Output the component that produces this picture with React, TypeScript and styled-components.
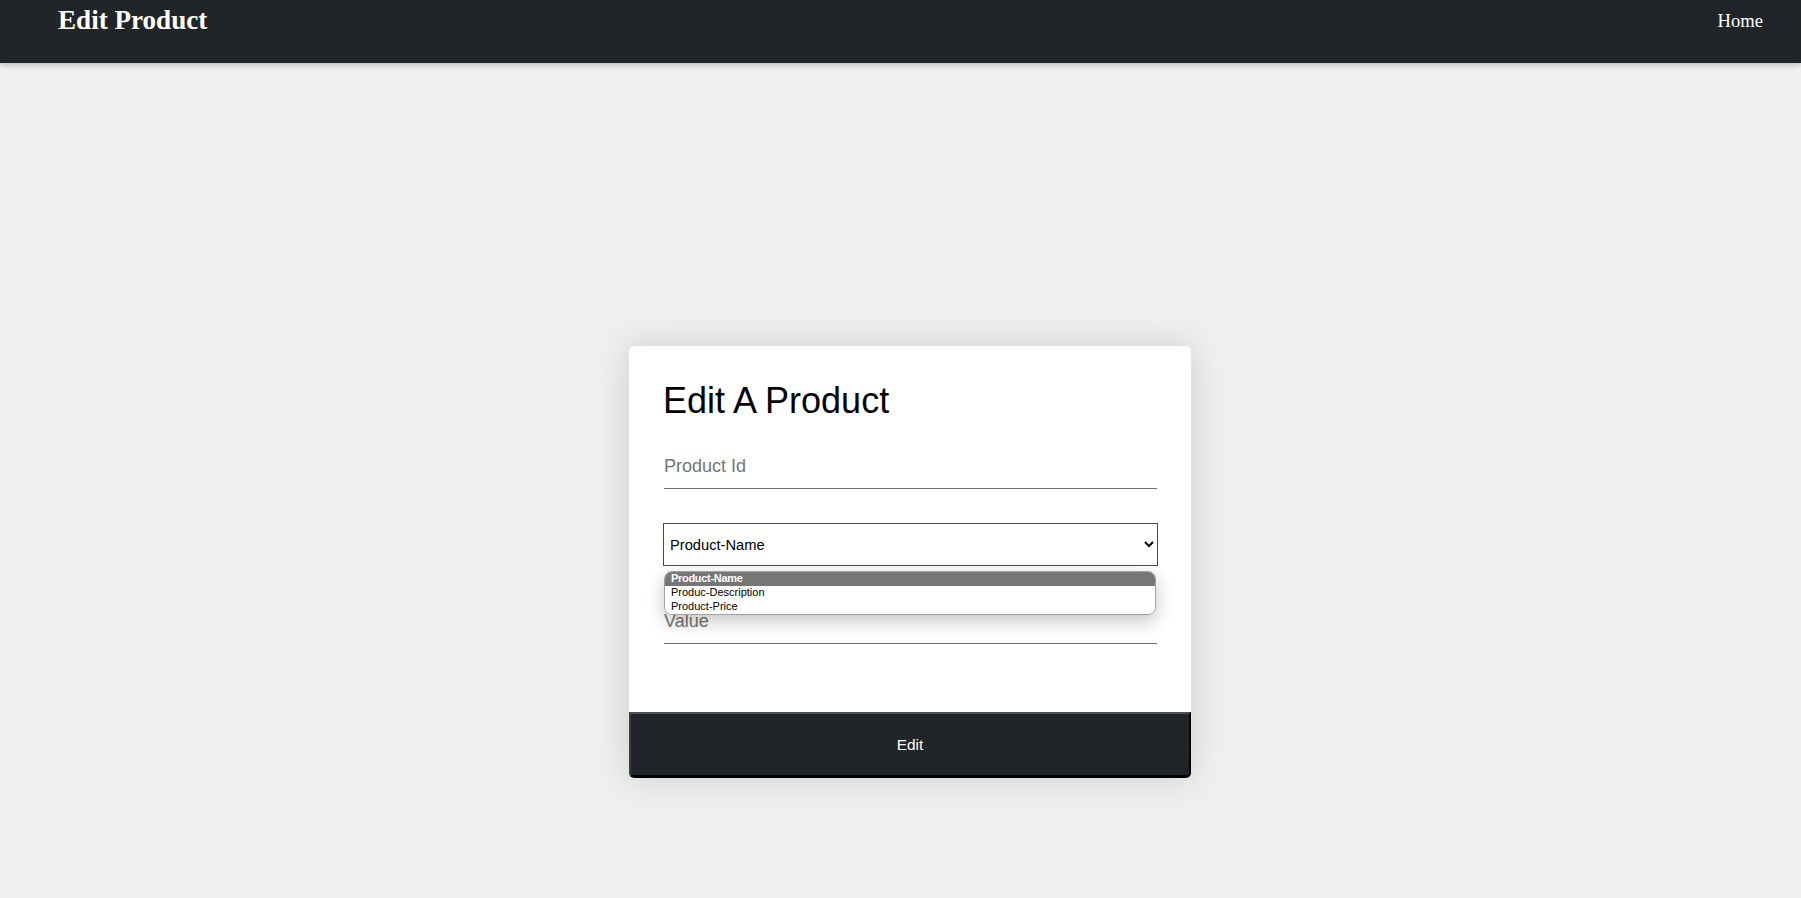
import React from "react";
import styled, { createGlobalStyle } from "styled-components";

const GlobalStyle = createGlobalStyle`
  html, body {
    margin: 0;
    padding: 0;
    background: #efefef;
  }
  body {
    font-family: "Liberation Sans", Arial, sans-serif;
    min-height: 898px;
  }
`;

const Header = styled.header`
  position: relative;
  z-index: 2;
  height: 63px;
  box-sizing: border-box;
  background: #212529;
  box-shadow: 0 2px 5px rgba(0, 0, 0, 0.22);
  display: flex;
  justify-content: space-between;
  align-items: flex-start;
  padding: 0 38px 0 58px;
  font-family: "Liberation Serif", "Times New Roman", serif;
  color: #ffffff;
`;

const Brand = styled.h2`
  margin: 5px 0 0;
  font-size: 27.1px;
  line-height: 1.15;
  font-weight: 700;
`;

const NavLink = styled.a`
  margin-top: 10px;
  font-size: 18.6px;
  line-height: 1.15;
  color: #ffffff;
  text-decoration: none;
  cursor: pointer;
`;

const Main = styled.main`
  display: flex;
  justify-content: center;
  padding: 283px 0 0 19px;
`;

const Card = styled.section`
  width: 562px;
  background: #ffffff;
  border-radius: 5px;
  box-shadow: 0 0 36px rgba(0, 0, 0, 0.14);
  display: flex;
  flex-direction: column;
`;

const Form = styled.div`
  display: flex;
  flex-direction: column;
  padding: 35px 34px 68px 35px;
`;

const Title = styled.h1`
  margin: 0 0 23px -1px;
  font-size: 36px;
  line-height: 40px;
  font-weight: 400;
  color: #000000;
`;

const LineInput = styled.input<{ $gap?: number }>`
  margin-top: ${(p) => p.$gap ?? 0}px;
  box-sizing: border-box;
  width: 100%;
  height: 45px;
  padding: 12px 0;
  border: none;
  border-bottom: 1px solid #6f6f6f;
  outline: none;
  background: transparent;
  font-family: "Liberation Sans", Arial, sans-serif;
  font-size: 18px;
  line-height: 20px;
  color: #000;
  &::placeholder {
    color: #757575;
  }
`;

const SelectWrap = styled.div`
  position: relative;
  margin-top: 34px;
  margin-left: -1px;
  margin-right: -1px;
`;

const Select = styled.select`
  box-sizing: border-box;
  width: 100%;
  height: 43px;
  padding: 0 2px;
  border: 1px solid #4a4a4a;
  border-radius: 0;
  background: #ffffff;
  font-family: "Liberation Sans", Arial, sans-serif;
  font-size: 14.7px;
  color: #000;
`;

const Popup = styled.ul`
  position: absolute;
  z-index: 5;
  top: 48px;
  left: 1px;
  right: 2px;
  margin: 0;
  padding: 0;
  list-style: none;
  background: #ffffff;
  border: 1px solid #a3a3a3;
  border-radius: 8px;
  overflow: hidden;
  box-shadow: 0 6px 18px rgba(0, 0, 0, 0.24);
`;

const Option = styled.li<{ $active?: boolean }>`
  height: 14px;
  box-sizing: border-box;
  padding: 0 6px;
  font-family: "Liberation Sans", Arial, sans-serif;
  font-size: 11px;
  line-height: 12px;
  background: ${(p) => (p.$active ? "#767676" : "#ffffff")};
  color: ${(p) => (p.$active ? "#ffffff" : "#000000")};
  font-weight: ${(p) => (p.$active ? 700 : 400)};
  letter-spacing: ${(p) => (p.$active ? "-0.3px" : "0")};
`;

const SubmitButton = styled.button`
  height: 66px;
  width: 100%;
  box-sizing: border-box;
  background: #212529;
  color: #ffffff;
  border-style: solid;
  border-width: 2px 2px 3px 2px;
  border-color: #4d4d4d #000000 #000000 #3d3d3d;
  border-radius: 0 0 5px 5px;
  font-family: "Liberation Sans", Arial, sans-serif;
  font-size: 15.4px;
  cursor: pointer;
`;

const options = ["Product-Name", "Produc-Description", "Product-Price"];

export default function App() {
  return (
    <>
      <GlobalStyle />
      <Header>
        <Brand>Edit Product</Brand>
        <NavLink>Home</NavLink>
      </Header>
      <Main>
        <Card>
          <Form>
            <Title>Edit A Product</Title>
            <LineInput placeholder="Product Id" />
            <SelectWrap>
              <Select defaultValue="Product-Name">
                {options.map((o) => (
                  <option key={o} value={o}>
                    {o}
                  </option>
                ))}
              </Select>
              <Popup>
                {options.map((o, i) => (
                  <Option key={o} $active={i === 0}>
                    {o}
                  </Option>
                ))}
              </Popup>
            </SelectWrap>
            <LineInput $gap={33} placeholder="Value" />
          </Form>
          <SubmitButton>Edit</SubmitButton>
        </Card>
      </Main>
    </>
  );
}
